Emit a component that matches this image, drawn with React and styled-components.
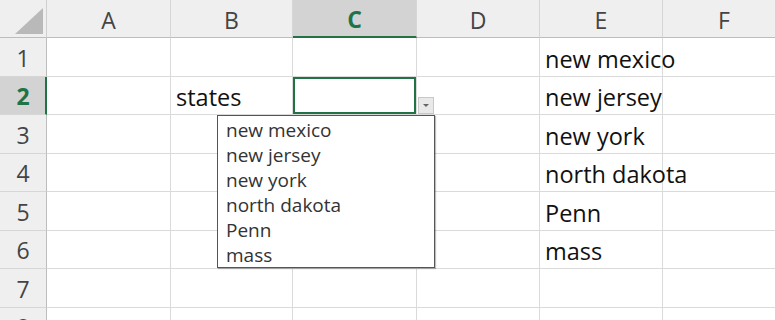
import React from "react";
import styled, { createGlobalStyle } from "styled-components";

const GlobalStyle = createGlobalStyle`
  html, body {
    margin: 0;
    padding: 0;
    background: #ffffff;
    overflow: hidden;
  }
  * {
    box-sizing: border-box;
  }
`;

const Sheet = styled.div`
  position: relative;
  width: 775px;
  height: 320px;
  overflow: hidden;
  font-family: "Open Sans", "Liberation Sans", sans-serif;
  display: grid;
  grid-template-columns: 47px 124px 122px 124px 123px 123px 123px;
  grid-template-rows: 38px repeat(8, 38.5px);
`;

const Corner = styled.div`
  position: relative;
  background: #efefef;
  border-right: 1px solid #cfcfcf;
  border-bottom: 1px solid #bdbdbd;

  &::after {
    content: "";
    position: absolute;
    right: 3px;
    bottom: 3px;
    width: 28px;
    height: 26px;
    background: #b9b9b9;
    clip-path: polygon(100% 0, 100% 100%, 0 100%);
  }
`;

const ColHeader = styled.div`
  display: flex;
  align-items: center;
  justify-content: center;
  background: ${({ active }) => (active ? "#d3d3d3" : "#efefef")};
  border-right: 1px solid #d6d6d6;
  border-bottom: ${({ active }) =>
    active ? "2px solid #217346" : "1px solid #bdbdbd"};
  color: ${({ active }) => (active ? "#217346" : "#444444")};
  font-weight: ${({ active }) => (active ? 700 : 400)};
  font-size: 23px;
  padding-top: 2px;
`;

const RowHeader = styled.div`
  display: flex;
  align-items: center;
  justify-content: center;
  background: ${({ active }) => (active ? "#d3d3d3" : "#efefef")};
  border-right: ${({ active }) =>
    active ? "2px solid #217346" : "1px solid #bdbdbd"};
  border-bottom: 1px solid #d6d6d6;
  color: ${({ active }) => (active ? "#217346" : "#444444")};
  font-weight: ${({ active }) => (active ? 700 : 400)};
  font-size: 23px;
  padding-top: 2px;
  padding-left: ${({ active }) => (active ? "1px" : "0")};
`;

const Cell = styled.div`
  position: relative;
  display: flex;
  align-items: center;
  padding: 4px 5px 0;
  border-right: 1px solid #dadada;
  border-bottom: 1px solid #dadada;
  font-size: 23.5px;
  color: #111111;
  white-space: nowrap;
  overflow: visible;
  box-shadow: ${({ selected }) =>
    selected ? "inset 0 0 0 2px #217346" : "none"};
`;

const DropButton = styled.div`
  position: absolute;
  left: 125px;
  top: 20px;
  width: 16px;
  height: 17px;
  background: #e9e9e9;
  border: 1px solid #c8c8c8;
  display: flex;
  align-items: center;
  justify-content: center;
  z-index: 3;

  &::after {
    content: "";
    width: 0;
    height: 0;
    border-left: 3px solid transparent;
    border-right: 3px solid transparent;
    border-top: 3px solid #666666;
  }
`;

const Dropdown = styled.ul`
  position: absolute;
  left: 217px;
  top: 115px;
  width: 218px;
  height: 153px;
  margin: 0;
  padding: 2px 0 0 8px;
  list-style: none;
  background: #ffffff;
  border: 1px solid #555555;
  box-shadow: 1px 1px 1px rgba(0, 0, 0, 0.25);
  z-index: 4;
`;

const Option = styled.li`
  font-size: 19px;
  line-height: 25px;
  color: #333333;
`;

const columns = ["A", "B", "C", "D", "E", "F"];

const data = {
  "2-B": "states",
  "1-E": "new mexico",
  "2-E": "new jersey",
  "3-E": "new york",
  "4-E": "north dakota",
  "5-E": "Penn",
  "6-E": "mass",
};

const options = [
  "new mexico",
  "new jersey",
  "new york",
  "north dakota",
  "Penn",
  "mass",
];

const App = () => {
  const rows = [1, 2, 3, 4, 5, 6, 7, 8];

  return (
    <>
      <GlobalStyle />
      <Sheet>
        <Corner />
        {columns.map((col) => (
          <ColHeader key={col} active={col === "C"}>
            {col}
          </ColHeader>
        ))}
        {rows.map((row) => (
          <React.Fragment key={row}>
            <RowHeader active={row === 2}>{row}</RowHeader>
            {columns.map((col) => {
              const isSel = row === 2 && col === "C";
              return (
                <Cell key={col} selected={isSel}>
                  {data[`${row}-${col}`]}
                  {isSel && <DropButton />}
                </Cell>
              );
            })}
          </React.Fragment>
        ))}
        <Dropdown>
          {options.map((o) => (
            <Option key={o}>{o}</Option>
          ))}
        </Dropdown>
      </Sheet>
    </>
  );
};

export default App;
